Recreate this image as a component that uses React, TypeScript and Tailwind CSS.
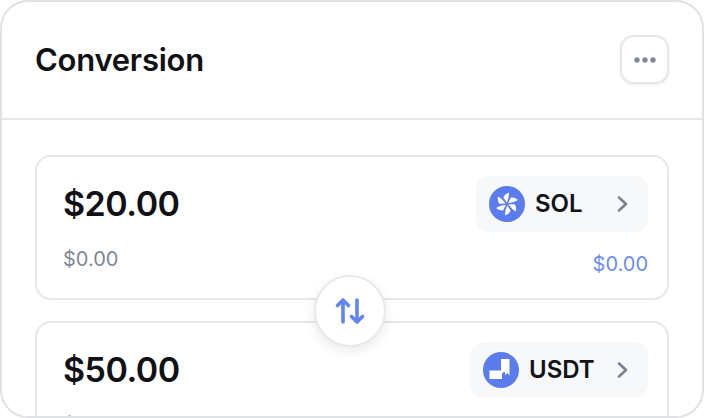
import type { ReactNode } from 'react';

function SolIcon() {
  return (
    <svg viewBox="0 0 36 36" className="h-9 w-9 shrink-0">
      <circle cx="18" cy="18" r="18" fill="#5b7cec" />
      {[0, 60, 120, 180, 240, 300].map((deg) => (
        <path
          key={deg}
          d="M17.8 16.6L14.4 11.4Q15.4 8.2 20 6.4Q20.2 11.6 17.8 16.6Z"
          fill="#fff"
          transform={`rotate(${deg} 18 18)`}
        />
      ))}
    </svg>
  );
}

function UsdtIcon() {
  return (
    <svg viewBox="0 0 36 36" className="h-9 w-9 shrink-0">
      <circle cx="18" cy="18" r="18" fill="#5b7cec" />
      <path d="M6.5 18.5H18V7H26.5V23.5L24.5 21L22 23V20H20.5L19 22V27H6.5Z" fill="#fff" />
    </svg>
  );
}

function TokenPill({ icon, label, labelWidth }: { icon: ReactNode; label: string; labelWidth: string }) {
  return (
    <div className="flex h-14 items-center rounded-[14px] bg-[#f7f8fa] pr-[17px] pl-[13px]">
      {icon}
      <span className={`ml-[10px] text-[24px] leading-none font-semibold text-[#111318] ${labelWidth}`}>{label}</span>
      <svg viewBox="0 0 16 24" className="h-6 w-4 text-[#7b8190]" fill="none" stroke="currentColor" strokeWidth="2.6" strokeLinecap="round" strokeLinejoin="round">
        <path d="M4 5.5L11 12L4 18.5" />
      </svg>
    </div>
  );
}

function AmountCard({ amount, icon, label, labelWidth }: { amount: string; icon: ReactNode; label: string; labelWidth: string }) {
  return (
    <div className="h-[145px] shrink-0 rounded-[16px] border-2 border-[#e6e7ea] pt-[19px] pr-[19px] pl-[26px]">
      <div className="flex items-center justify-between">
        <span className="-mt-px text-[34px] leading-none font-semibold tracking-[-0.5px] text-[#0f1115]">{amount}</span>
        <TokenPill icon={icon} label={label} labelWidth={labelWidth} />
      </div>
      <div className="mt-[15px] flex items-start justify-between">
        <span className="text-[20px] leading-6 text-[#7f8797]">$0.00</span>
        <span className="mt-[5px] text-[20px] leading-6 text-[#6d8cf2]">$0.00</span>
      </div>
    </div>
  );
}

export default function App() {
  return (
    <div className="h-[418px] w-[704px] overflow-hidden bg-white font-['Inter',sans-serif]">
      <div className="flex h-full flex-col overflow-hidden rounded-[28px] border-2 border-[#e0e1e3]">
        <div className="flex h-[118px] shrink-0 items-center justify-between border-b-2 border-[#e6e7ea] pr-[33px] pl-[33px]">
          <h2 className="text-[31px] font-semibold tracking-[-0.25px] text-[#0f1115]">Conversion</h2>
          <button className="mb-px flex h-[49px] w-[49px] items-center justify-center rounded-[14px] border-2 border-[#e6e7ea] bg-white shadow-[0_1px_3px_rgba(16,24,40,0.08)]">
            <svg viewBox="0 0 24 8" className="h-2 w-6 text-[#7f8797]" fill="currentColor">
              <circle cx="4" cy="4" r="2.7" />
              <circle cx="12" cy="4" r="2.7" />
              <circle cx="20" cy="4" r="2.7" />
            </svg>
          </button>
        </div>
        <div className="relative flex flex-col gap-[21px] px-[33px] pt-[35px]">
          <AmountCard amount="$20.00" icon={<SolIcon />} label="SOL" labelWidth="w-[80px]" />
          <AmountCard amount="$50.00" icon={<UsdtIcon />} label="USDT" labelWidth="w-[86px]" />
          <div className="absolute top-[155px] left-[312px] flex h-[72px] w-[72px] items-center justify-center rounded-full border-2 border-[#e8e9ec] bg-white shadow-[0_4px_12px_rgba(16,24,40,0.09)]">
            <svg viewBox="0 0 32 32" className="h-8 w-8 text-[#6486f0]" fill="none" stroke="currentColor" strokeWidth="3.6" strokeLinecap="round" strokeLinejoin="round">
              <path d="M9 27V5M3.5 10.5L9 5L14.5 10.5" />
              <path d="M23 5V27M17.5 21.5L23 27L28.5 21.5" />
            </svg>
          </div>
        </div>
      </div>
    </div>
  );
}
